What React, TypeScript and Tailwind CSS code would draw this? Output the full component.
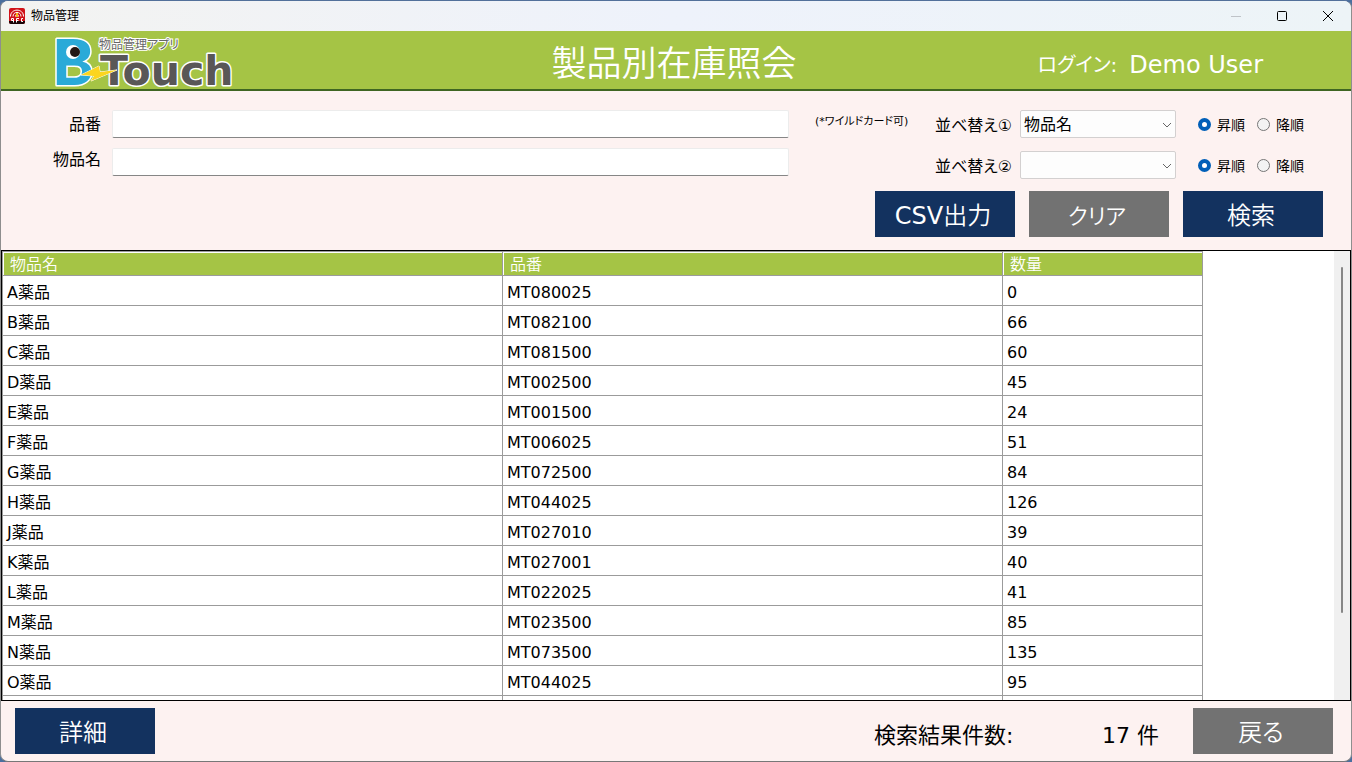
import { useState } from "react";
import type { ReactNode } from "react";

type Item = { name: string; code: string; qty: string };

const items: Item[] = [
  { name: "A薬品", code: "MT080025", qty: "0" },
  { name: "B薬品", code: "MT082100", qty: "66" },
  { name: "C薬品", code: "MT081500", qty: "60" },
  { name: "D薬品", code: "MT002500", qty: "45" },
  { name: "E薬品", code: "MT001500", qty: "24" },
  { name: "F薬品", code: "MT006025", qty: "51" },
  { name: "G薬品", code: "MT072500", qty: "84" },
  { name: "H薬品", code: "MT044025", qty: "126" },
  { name: "J薬品", code: "MT027010", qty: "39" },
  { name: "K薬品", code: "MT027001", qty: "40" },
  { name: "L薬品", code: "MT022025", qty: "41" },
  { name: "M薬品", code: "MT023500", qty: "85" },
  { name: "N薬品", code: "MT073500", qty: "135" },
  { name: "O薬品", code: "MT044025", qty: "95" },
  { name: "", code: "", qty: "" },
];

function AppIcon() {
  return (
    <svg width="16" height="16" viewBox="0 0 16 16" aria-hidden="true">
      <rect width="16" height="16" rx="2" fill="#d01218" />
      <g fill="none" stroke="#fff" strokeWidth="1">
        <path d="M1.500 8.500C1.500 0 14.500 0 14.500 8.500" />
        <path d="M4 8.500C4 3 12 3 12 8.500" />
        <path d="M6.500 8.500C6.500 5.500 9.500 5.500 9.500 8.500" />
      </g>
      <rect x="7" y="5" width="2" height="4" fill="#f5b81c" />
      <path d="M0 13h16v1a2 2 0 0 1-2 2H2a2 2 0 0 1-2-2z" fill="#1a0506" />
      <g fill="none" stroke="#fff" strokeWidth="1">
        <path d="M4.500 14.500v-4h-2v2h2" />
        <path d="M7.500 14.500v-4h2.500M7.500 12.500h2" />
        <path d="M14 10.500h-1.500v3h1.500" />
      </g>
    </svg>
  );
}

function Logo() {
  return (
    <svg width="184" height="56" viewBox="0 0 184 56" className="overflow-visible" role="img" aria-label="BTouch">
      <g strokeLinejoin="round" style={{ paintOrder: "stroke" }}>
        <text x="-2" y="50" fontFamily="Lato" fontWeight="900" fontSize="63" fill="#2aaad8" stroke="#fff" strokeWidth="3">
          B
        </text>
        <rect x="12" y="10" width="16" height="16" fill="#2aaad8" />
        <circle cx="19" cy="17" r="7" fill="#fff" />
        <circle cx="21" cy="17" r="5" fill="#231815" />
        <text x="46" y="50" fontFamily="DejaVu Sans" fontWeight="700" fontSize="41" fill="#595757" stroke="#fff" strokeWidth="3">
          Touch
        </text>
        <path d="M27 40L45 31l1 6 17-2-26 11 3-5z" fill="#fbd51f" stroke="#fff" strokeWidth="1" />
      </g>
      <text
        x="45"
        y="14"
        fontFamily="Noto Sans CJK JP"
        fontSize="12"
        fill="#666"
        stroke="#fff"
        strokeWidth="2"
        style={{ paintOrder: "stroke" }}
      >
        物品管理アプリ
      </text>
    </svg>
  );
}

function ActionButton({ tone, children }: { tone: "navy" | "gray"; children: ReactNode }) {
  const color = tone === "navy" ? "bg-[#13325f]" : "bg-[#727272]";
  return (
    <button
      type="button"
      className={`h-[46px] w-[140px] pt-[3px] pr-1 text-2xl leading-none font-[350] text-white ${color}`}
    >
      {children}
    </button>
  );
}

function SortRow({ id, label, initial }: { id: string; label: string; initial: string }) {
  const [field, setField] = useState(initial);
  const [order, setOrder] = useState("asc");
  const options = [
    { value: "asc", text: "昇順" },
    { value: "desc", text: "降順" },
  ];
  return (
    <div className="flex h-7 items-center">
      <label htmlFor={id} className="w-[85px] pt-[3px] text-base">
        {label}
      </label>
      <div className="relative">
        <select
          id={id}
          value={field}
          onChange={(e) => setField(e.target.value)}
          className="h-7 w-[156px] appearance-none rounded-xs border border-[#d3d0d0] bg-[#fdfdfd] px-[3px] pt-[2px] text-base leading-6"
        >
          <option value=""></option>
          <option value="name">物品名</option>
          <option value="code">品番</option>
          <option value="qty">数量</option>
        </select>
        <svg width="10" height="6" viewBox="0 0 10 6" className="pointer-events-none absolute top-3 right-1" aria-hidden="true">
          <path d="M1 1l4 4 4-4" fill="none" stroke="#666" />
        </svg>
      </div>
      <div className="ml-[22px] flex gap-3">
        {options.map((o) => (
          <label key={o.value} className="flex items-center gap-[6px] text-sm">
            <input
              type="radio"
              name={`${id}-order`}
              checked={order === o.value}
              onChange={() => setOrder(o.value)}
              className="size-[13px] appearance-none rounded-full border border-[#767676] bg-[#f3f3f3] checked:border-4 checked:border-[#005fb8] checked:bg-white"
            />
            <span className="pt-px">{o.text}</span>
          </label>
        ))}
      </div>
    </div>
  );
}

export default function App() {
  return (
    <div className="h-screen bg-[#4a6f9f] text-black [font-family:'DejaVu_Sans','Noto_Sans_CJK_JP',sans-serif] [font-feature-settings:'palt']">
      <div className="flex h-full flex-col overflow-hidden rounded-lg border border-t-[#52709a] border-r-[#8e8e8e] border-b-[#777] border-l-[#8e8e8e] bg-[#fdf2f1]">
        <div className="flex h-[30px] shrink-0 items-center bg-linear-to-r from-[#f3f3f1] via-[#eef2fb] to-[#edf4f7] pr-[17px] pl-2">
          <AppIcon />
          <span className="ml-[6px] text-xs">物品管理</span>
          <div className="ml-auto flex items-center gap-[34px]">
            <button type="button" aria-label="最小化" className="text-[#bfc3c8]">
              <svg width="12" height="12" viewBox="0 0 12 12">
                <path d="M1 6.500h10" stroke="currentColor" />
              </svg>
            </button>
            <button type="button" aria-label="最大化">
              <svg width="12" height="12" viewBox="0 0 12 12">
                <rect x="1.500" y="1.500" width="9" height="9" rx="1" fill="none" stroke="currentColor" />
              </svg>
            </button>
            <button type="button" aria-label="閉じる">
              <svg width="12" height="12" viewBox="0 0 12 12">
                <path d="M1 1l10 10M11 1L1 11" stroke="currentColor" />
              </svg>
            </button>
          </div>
        </div>

        <header className="grid h-[60px] shrink-0 grid-cols-[1fr_auto_1fr] items-center border-b-2 border-[#3f6622] bg-[#a5c445] text-white">
          <div className="pt-1 pl-[53px]">
            <Logo />
          </div>
          <h1 className="pt-[6px] pr-1 text-[35px] leading-none font-[350]">製品別在庫照会</h1>
          <p className="flex items-center justify-end gap-3 pt-2 pr-[88px] text-2xl leading-none">
            <span className="text-xl leading-none">ログイン:</span>
            <span>Demo User</span>
          </p>
        </header>

        <form className="shrink-0 pt-[19px] pr-7 pb-[13px] pl-4">
          <div className="flex items-start">
            <div className="grid flex-1 grid-cols-[84px_1fr] gap-x-[11px] gap-y-[10px]">
              <label htmlFor="code" className="pt-[2px] text-right text-base leading-[26px]">
                品番
              </label>
              <input
                id="code"
                type="text"
                className="h-7 rounded-xs border border-[#ececec] border-b-[#868686] bg-white px-1"
              />
              <label htmlFor="name" className="text-right text-base leading-6">
                物品名
              </label>
              <input
                id="name"
                type="text"
                className="h-7 rounded-xs border border-[#ececec] border-b-[#868686] bg-white px-1"
              />
            </div>
            <p className="w-[146px] pt-px pl-[26px] text-[11px] leading-[22px] whitespace-nowrap">(*ワイルドカード可)</p>
            <div className="flex w-[388px] flex-col gap-[13px]">
              <SortRow id="sort1" label="並べ替え①" initial="name" />
              <SortRow id="sort2" label="並べ替え②" initial="" />
            </div>
          </div>
          <div className="mt-3 flex justify-end gap-[14px]">
            <ActionButton tone="navy">
              <span className="font-normal">CSV</span>出力
            </ActionButton>
            <ActionButton tone="gray">
              <span className="text-[22px]">クリア</span>
            </ActionButton>
            <ActionButton tone="navy">検索</ActionButton>
          </div>
        </form>

        <section className="flex min-h-0 flex-1 border border-black bg-white">
          <div className="min-w-0 flex-1 overflow-auto [scrollbar-width:none]">
            <table className="w-[1201px] table-fixed border-separate border-spacing-0 text-left">
              <colgroup>
                <col className="w-[501px]" />
                <col className="w-[500px]" />
                <col className="w-[200px]" />
              </colgroup>
              <thead>
                <tr className="h-[25px] text-base leading-5 text-white">
                  {["物品名", "品番", "数量"].map((title) => (
                    <th
                      key={title}
                      scope="col"
                      className="border-t border-r border-b border-[#9b9b9b] bg-[#a5c445] p-0 font-[350] first:border-l"
                    >
                      <div className="border-t border-l border-white pt-[2px] pl-[6px]">{title}</div>
                    </th>
                  ))}
                </tr>
              </thead>
              <tbody>
                {items.map((item, i) => (
                  <tr key={i} className="h-[30px] text-base leading-6">
                    {[item.name, item.code, item.qty].map((text, c) => (
                      <td key={c} className="border-r border-b border-[#9b9b9b] px-1 pt-[5px] pb-0 first:border-l">
                        {text}
                      </td>
                    ))}
                  </tr>
                ))}
              </tbody>
            </table>
          </div>
          <div className="flex w-4 justify-center bg-[#f0f0f0] pt-4">
            <div className="h-4/5 w-[2px] rounded-full bg-[#868686]" />
          </div>
        </section>

        <footer className="flex h-[60px] shrink-0 items-center pr-[18px] pl-[14px]">
          <ActionButton tone="navy">詳細</ActionButton>
          <div className="mt-[10px] ml-auto flex w-[285px] justify-between text-[22px] leading-none">
            <span>検索結果件数:</span>
            <span>17 件</span>
          </div>
          <div className="ml-[34px] flex">
            <ActionButton tone="gray">戻る</ActionButton>
          </div>
        </footer>
      </div>
    </div>
  );
}
